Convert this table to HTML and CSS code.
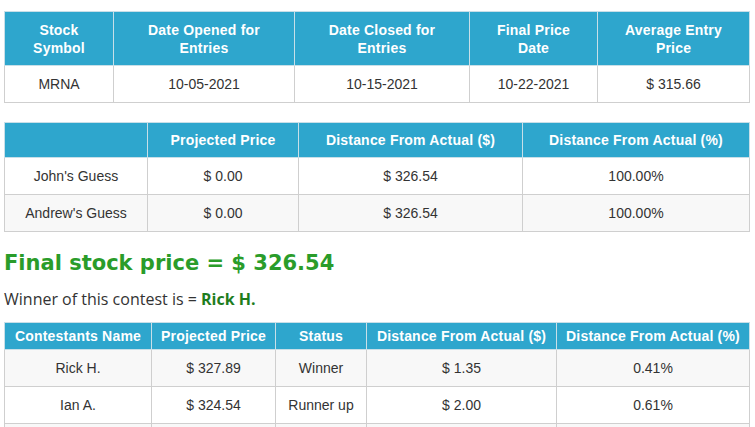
FILE: index.html
```html
<!DOCTYPE html>
<html>
<head>
<meta charset="utf-8">
<link rel="stylesheet" href="styles.css">
</head>
<body>
<div class="page">
  <table class="grid t1">
    <colgroup><col class="c1"><col class="c2"><col class="c3"><col class="c4"><col class="c5"></colgroup>
    <thead>
      <tr><th>Stock<br>Symbol</th><th>Date Opened for<br>Entries</th><th>Date Closed for<br>Entries</th><th>Final Price<br>Date</th><th>Average Entry<br>Price</th></tr>
    </thead>
    <tbody>
      <tr><td>MRNA</td><td>10-05-2021</td><td>10-15-2021</td><td>10-22-2021</td><td>$ 315.66</td></tr>
    </tbody>
  </table>

  <table class="grid t2">
    <colgroup><col class="c1"><col class="c2"><col class="c3"><col class="c4"></colgroup>
    <thead>
      <tr><th></th><th>Projected Price</th><th>Distance From Actual ($)</th><th>Distance From Actual (%)</th></tr>
    </thead>
    <tbody>
      <tr><td>John's Guess</td><td>$ 0.00</td><td>$ 326.54</td><td>100.00%</td></tr>
      <tr class="alt"><td>Andrew's Guess</td><td>$ 0.00</td><td>$ 326.54</td><td>100.00%</td></tr>
    </tbody>
  </table>

  <h2 class="final">Final stock price = $ 326.54</h2>
  <p class="winner">Winner of this contest is = <strong>Rick H.</strong></p>

  <table class="grid t3">
    <colgroup><col class="c1"><col class="c2"><col class="c3"><col class="c4"><col class="c5"></colgroup>
    <thead>
      <tr><th>Contestants Name</th><th>Projected Price</th><th>Status</th><th>Distance From Actual ($)</th><th>Distance From Actual (%)</th></tr>
    </thead>
    <tbody>
      <tr class="alt"><td>Rick H.</td><td>$ 327.89</td><td>Winner</td><td>$ 1.35</td><td>0.41%</td></tr>
      <tr><td>Ian A.</td><td>$ 324.54</td><td>Runner up</td><td>$ 2.00</td><td>0.61%</td></tr>
      <tr class="alt"><td></td><td></td><td></td><td></td><td></td></tr>
    </tbody>
  </table>
</div>
</body>
</html>
```

FILE: styles.css
```css
html, body {
  margin: 0;
  padding: 0;
  background: #ffffff;
}
body {
  font-family: "Liberation Sans", Arial, sans-serif;
  color: #333333;
}
.page {
  padding: 11px 6px 0 4px;
}
.grid {
  border-collapse: collapse;
  table-layout: fixed;
  width: 745px;
  font-size: 14px;
  margin: 0 0 19px 0;
}
.grid th,
.grid td {
  border: 1px solid #cfcfcf;
  text-align: center;
  vertical-align: middle;
  padding: 0 2px;
}
.grid th {
  background: #2ea6cd;
  color: #ffffff;
  font-weight: bold;
  line-height: 18px;
  letter-spacing: 0.2px;
  border-color: #c8dfe8;
}
.grid td {
  height: 36px;
  line-height: 17px;
  background: #ffffff;
}
.grid tr.alt td {
  background: #f8f8f8;
}
.t1 th { height: 53px; }
.t2 th { height: 34px; }
.t3 th { height: 26px; }

.t2 { margin-bottom: 17px; }

.t1 .c1 { width: 109px; }
.t1 .c2 { width: 181px; }
.t1 .c3 { width: 175px; }
.t1 .c4 { width: 128px; }
.t1 .c5 { width: 152px; }

.t2 .c1 { width: 143px; }
.t2 .c2 { width: 151px; }
.t2 .c3 { width: 224px; }
.t2 .c4 { width: 227px; }

.t3 .c1 { width: 147px; }
.t3 .c2 { width: 124px; }
.t3 .c3 { width: 91px; }
.t3 .c4 { width: 190px; }
.t3 .c5 { width: 193px; }

.final {
  margin: 0;
  font-family: "DejaVu Sans", "Liberation Sans", sans-serif;
  font-size: 21px;
  line-height: 28px;
  font-weight: bold;
  color: #2a9c2a;
}
.winner {
  margin: 11px 0 12px 0;
  font-family: "Open Sans", "Noto Sans", sans-serif;
  font-size: 16px;
  line-height: 22px;
  color: #333333;
}
.winner strong {
  color: #1e7d1e;
  font-weight: bold;
}
```
